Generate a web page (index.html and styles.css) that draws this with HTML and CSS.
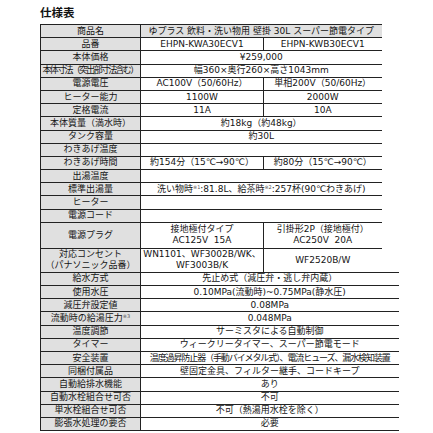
FILE: index.html
```html
<!DOCTYPE html>
<html lang="ja">
<head>
<meta charset="utf-8">
<title>仕様表</title>
<link rel="stylesheet" href="styles.css">
</head>
<body>
<div class="page">
  <h2 class="title">仕様表</h2>
  <table class="spec">
    <colgroup>
      <col class="c-lab"><col class="c-v1"><col class="c-v2"><col class="c-v3">
    </colgroup>
    <tr><td class="lab">商品名</td><td class="hd e" colspan="2">ゆプラス 飲料・洗い物用 壁掛 30L スーパー節電タイプ</td><td class="p"></td></tr>
    <tr><td class="lab">品番</td><td>EHPN-KWA30ECV1</td><td class="e">EHPN-KWB30ECV1</td><td class="p"></td></tr>
    <tr><td class="lab">本体価格</td><td class="e" colspan="2">¥259,000</td><td class="p"></td></tr>
    <tr><td class="lab squeeze">本体寸法（突出部寸法含む）</td><td class="e" colspan="2">幅360×奥行260×高さ1043mm</td><td class="p"></td></tr>
    <tr><td class="lab">電源電圧</td><td>AC100V（50/60Hz）</td><td class="e">単相200V（50/60Hz）</td><td class="p"></td></tr>
    <tr><td class="lab">ヒーター能力</td><td>1100W</td><td class="e">2000W</td><td class="p"></td></tr>
    <tr><td class="lab">定格電流</td><td>11A</td><td class="e">10A</td><td class="p"></td></tr>
    <tr><td class="lab">本体質量（満水時）</td><td class="e" colspan="2">約18kg（約48kg）</td><td class="p"></td></tr>
    <tr><td class="lab">タンク容量</td><td class="e" colspan="2">約30L</td><td class="p"></td></tr>
    <tr><td class="lab">わきあげ温度</td><td class="e" colspan="2"></td><td class="p"></td></tr>
    <tr><td class="lab">わきあげ時間</td><td>約154分（15℃→90℃）</td><td class="e">約80分（15℃→90℃）</td><td class="p"></td></tr>
    <tr><td class="lab">出湯温度</td><td class="e" colspan="2"></td><td class="p"></td></tr>
    <tr><td class="lab">標準出湯量</td><td class="e" colspan="2">洗い物時<sup class="note">※1</sup>:81.8L、給茶時<sup class="note">※2</sup>:257杯(90℃わきあげ)</td><td class="p"></td></tr>
    <tr><td class="lab">ヒーター</td><td class="e" colspan="2"></td><td class="p"></td></tr>
    <tr><td class="lab">電源コード</td><td class="e" colspan="2"></td><td class="p"></td></tr>
    <tr class="r2"><td class="lab">電源プラグ</td><td>接地極付タイプ<br>AC125V&nbsp;&nbsp;15A</td><td class="e">引掛形2P（接地極付）<br>AC250V&nbsp;&nbsp;20A</td><td class="p"></td></tr>
    <tr class="r2b"><td class="lab">対応コンセント<br>（パナソニック品番）</td><td>WN1101、WF3002B/WK、<br>WF3003B/K</td><td class="e">WF2520B/W</td><td class="p"></td></tr>
    <tr><td class="lab">給水方式</td><td class="e" colspan="3">先止め式（減圧弁・逃し弁内蔵）</td></tr>
    <tr><td class="lab">使用水圧</td><td class="e" colspan="3">0.10MPa(流動時)~0.75MPa(静水圧)</td></tr>
    <tr><td class="lab">減圧弁設定値</td><td class="e" colspan="3">0.08MPa</td></tr>
    <tr><td class="lab">流動時の給湯圧力<sup class="note">※3</sup></td><td class="e" colspan="3">0.048MPa</td></tr>
    <tr><td class="lab">温度調節</td><td class="e" colspan="3">サーミスタによる自動制御</td></tr>
    <tr><td class="lab">タイマー</td><td class="e" colspan="3">ウィークリータイマー、スーパー節電モード</td></tr>
    <tr><td class="lab">安全装置</td><td class="e tight" colspan="3">温度過昇防止器（手動バイメタル式）、電流ヒューズ、漏水検知装置</td></tr>
    <tr><td class="lab">同梱付属品</td><td class="e" colspan="3">壁固定金具、フィルター継手、コードキープ</td></tr>
    <tr><td class="lab">自動給排水機能</td><td class="e" colspan="3">あり</td></tr>
    <tr><td class="lab">自動水栓組合せ可否</td><td class="e" colspan="3">不可</td></tr>
    <tr><td class="lab">単水栓組合せ可否</td><td class="e" colspan="3">不可（熱湯用水栓を除く）</td></tr>
    <tr><td class="lab">膨張水処理の要否</td><td class="e" colspan="3">必要</td></tr>
  </table>
</div>
</body>
</html>
```

FILE: styles.css
```css
html, body {
  margin: 0;
  padding: 0;
  background: #ffffff;
}

body {
  font-family: "DejaVu Sans", "Noto Sans CJK JP", sans-serif;
  color: #141414;
}

.page {
  padding: 4px 0 0 40px;
}

.title {
  margin: 0 0 4px 0;
  font-family: "Noto Sans CJK JP", sans-serif;
  font-weight: 700;
  font-size: 11.5px;
  line-height: 16px;
  color: #111;
}

.spec {
  border-collapse: collapse;
  table-layout: fixed;
  width: 358px;
  font-size: 9px;
}

.c-lab { width: 100px; }
.c-v1 { width: 123px; }
.c-v2 { width: 118px; }
.c-v3 { width: 17px; }

.spec tr {
  height: 13.2px;
}

.spec tr.r2 {
  height: 26px;
}

.spec tr.r2b {
  height: 24px;
}

.spec td {
  border: 1px solid #222;
  padding: 0;
  text-align: center;
  vertical-align: middle;
  line-height: 11px;
  white-space: nowrap;
  overflow: hidden;
}

.spec td.lab {
  background: #e0e0e0;
}

.spec td.hd {
  background: #e0e0e0;
}

.spec td.e {
  border-right: none;
}

.spec td.p {
  border: none;
}

.spec td.tight {
  letter-spacing: -1.1px;
}

.spec td.squeeze {
  letter-spacing: -1.7px;
  text-indent: -1px;
}

.note {
  font-size: 5px;
  line-height: 0;
  vertical-align: 3px;
  color: #555;
}
```
